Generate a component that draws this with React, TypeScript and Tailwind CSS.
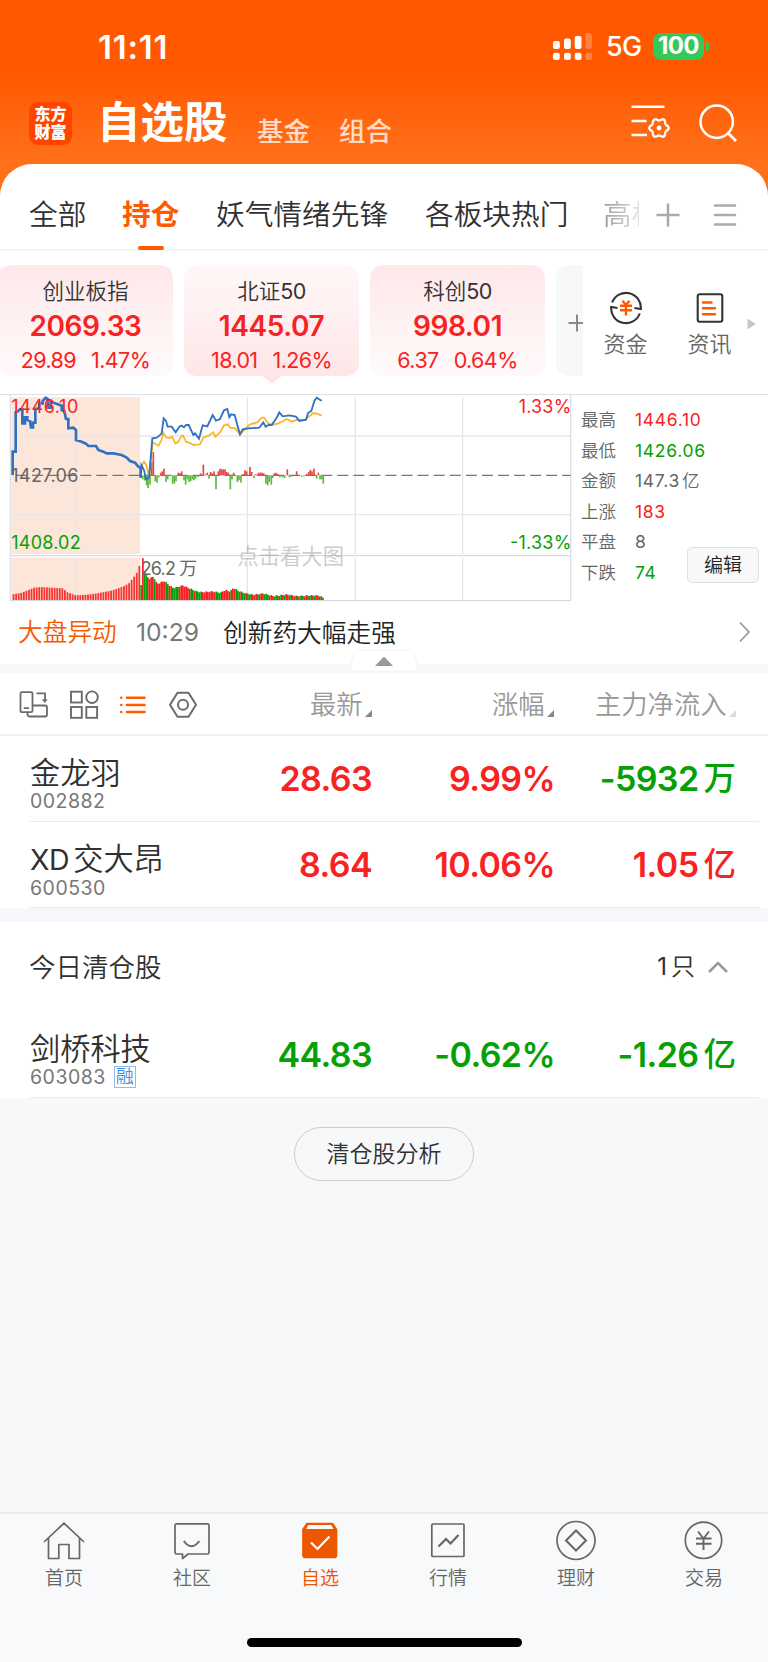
/**
 * Watchlist screen of a stock trading app
 */

import type { ReactNode } from 'react';

type Point = [number, number];

const UP = '#f82222';
const DOWN = '#05a005';

/* ---------- Chart data (chart units, 3 per pixel) ---------- */

const PREV_SESSION: Point[] = [
    [38, 270], [38, 200], [47, 200], [47, 83], [55, 78], [60, 73], [67, 73], [67, 115], [75, 115], [75, 97],
    [82, 97], [82, 105], [90, 108], [93, 127], [99, 127], [99, 113], [106, 113], [106, 72], [118, 70], [118, 55],
    [128, 55], [128, 48], [137, 38], [143, 42], [143, 68], [152, 68], [152, 50], [165, 55], [185, 62], [185, 75],
    [193, 78], [198, 102], [205, 102], [205, 130], [220, 128], [228, 135], [228, 165], [245, 170], [258, 176],
    [265, 183], [288, 183], [295, 195], [310, 200], [320, 205], [340, 205], [365, 210], [380, 218], [390, 228],
    [405, 233], [415, 245], [422, 248], [422, 278],
];

const PRICE: Point[] = [
    [422, 278], [424, 240], [432, 255], [438, 283], [447, 278], [457, 160], [470, 158], [478, 152], [485, 145],
    [491, 100], [498, 108], [503, 125], [515, 125], [527, 142], [538, 125], [545, 122], [552, 127], [558, 120],
    [566, 120], [580, 150], [585, 145], [597, 161], [608, 121], [622, 124], [638, 90], [648, 107], [660, 102],
    [672, 76], [682, 72], [688, 97], [694, 88], [704, 90], [712, 120], [720, 148], [728, 133], [745, 130],
    [778, 128], [790, 112], [797, 125], [806, 120], [815, 120], [830, 98], [838, 82], [848, 94], [868, 91],
    [888, 95], [898, 108], [918, 104], [924, 84], [934, 78], [943, 48], [950, 38], [965, 47],
];

const AVERAGE: Point[] = [
    [422, 278], [426, 240], [432, 230], [438, 238], [445, 265], [448, 275], [458, 172], [475, 182], [485, 165],
    [490, 143], [498, 157], [508, 160], [516, 155], [526, 175], [534, 172], [545, 152], [549, 152], [558, 170],
    [572, 175], [580, 180], [600, 178], [610, 158], [625, 152], [640, 142], [646, 155], [660, 142], [672, 121],
    [684, 118], [690, 128], [706, 130], [720, 148], [735, 132], [750, 118], [772, 112], [785, 98], [792, 98],
    [805, 115], [818, 120], [835, 115], [850, 108], [860, 102], [875, 110], [890, 105], [915, 105], [930, 92],
    [940, 84], [950, 86], [965, 91],
];

// Signed bar heights around the previous close
const MOMENTUM: Point[] = [
    [428, -12], [434, -15], [440, -30], [444, -38], [450, -28], [455, 40], [460, 70], [466, -18], [471, -22],
    [476, -6], [482, 8], [487, 12], [492, 20], [498, -20], [503, -12], [508, -3], [518, -25], [523, -25],
    [528, -18], [535, 8], [540, 6], [545, 12], [552, -15], [557, -28], [562, -12], [567, -20], [572, -17],
    [577, -12], [582, -15], [587, -10], [595, -5], [602, 6], [610, 32], [616, 3], [622, 8], [627, -10],
    [632, 10], [637, 6], [642, 12], [648, -42], [655, 12], [660, 20], [665, 18], [670, 18], [675, 18],
    [680, 10], [685, 8], [691, -42], [696, -12], [701, 8], [712, -20], [717, -15], [723, -22], [730, 4],
    [735, 15], [740, 12], [750, 25], [755, 10], [762, -8], [768, 4], [776, 8], [781, 8], [786, 8], [791, 6],
    [798, -25], [803, -30], [808, -20], [814, -28], [818, -8], [823, 6], [828, 8], [834, 4], [840, -6],
    [848, -6], [854, -8], [862, 18], [868, -6], [875, -4], [890, 12], [905, -4], [912, -3], [920, 4],
    [926, 10], [931, 16], [936, 12], [942, 20], [950, -10], [955, 8], [960, -12], [965, -12], [970, -25],
];

const VOLUME_BASE = 645;

const PREV_VOLUME: Point[] = [
    [36, 628], [60, 624], [75, 618], [100, 608], [120, 606], [150, 608], [185, 610], [200, 622], [225, 631],
    [260, 629], [290, 625], [330, 617], [350, 611], [370, 603], [385, 594], [400, 575], [408, 563], [418, 536],
];

const VOLUME: Point[] = [
    [420, 600], [425, 600], [428, 518], [433, 555], [438, 570], [447, 580], [460, 573], [470, 595], [480, 592],
    [492, 586], [505, 598], [520, 608], [548, 600], [575, 612], [590, 618], [605, 620], [640, 618], [660, 622],
    [675, 614], [690, 618], [700, 607], [712, 615], [730, 622], [760, 628], [790, 624], [820, 632], [860, 627],
    [890, 632], [930, 630], [955, 630], [972, 638],
];

const VOLUME_COLORS =
    'grggrrrrgrrrrrrggrrggggrrrrrrrggrggggrrrrrrrrggggrrrrrgrrgggrggrgggrrrggrrgggrrrggrggrgrrggrrgrrggrrgg' +
    'grgrrggrrgg';

function interpolate(points: Point[], x: number) {
    for (let i = 1; i < points.length; i++) {
        const [x0, y0] = points[i - 1];
        const [x1, y1] = points[i];
        if (x <= x1) return y0 + ((y1 - y0) * (x - x0)) / (x1 - x0);
    }
    return points[points.length - 1][1];
}

const toPolyline = (points: Point[]) => points.map((p) => p.join(',')).join(' ');

const prevBars = Array.from({ length: 50 }, (_, i) => 38 + i * 7.7);
const volumeBars = Array.from({ length: 110 }, (_, i) => 421 + i * 5);

/* ---------- Content ---------- */

const INDICES = [
    { name: '创业板指', price: '2069.33', change: '29.89', percent: '1.47%', active: false },
    { name: '北证', suffix: '50', price: '1445.07', change: '18.01', percent: '1.26%', active: true },
    { name: '科创', suffix: '50', price: '998.01', change: '6.37', percent: '0.64%', active: false },
];

const STATS = [
    { label: '最高', value: '1446.10', color: 'text-[#f82222]' },
    { label: '最低', value: '1426.06', color: 'text-[#05a005]' },
    { label: '金额', value: '147.3', unit: '亿', color: 'text-[#666]' },
    { label: '上涨', value: '183', color: 'text-[#f82222]' },
    { label: '平盘', value: '8', color: 'text-[#666]' },
    { label: '下跌', value: '74', color: 'text-[#05a005]' },
];

interface Stock {
    prefix?: string;
    name: string;
    code: string;
    price: string;
    percent: string;
    flow: string;
    unit: string;
    margin?: boolean;
    color: string;
    flowColor: string;
}

const HOLDINGS: Stock[] = [
    { name: '金龙羽', code: '002882', price: '28.63', percent: '9.99%', flow: '-5932', unit: '万', color: 'text-[#f82222]', flowColor: 'text-[#05a005]' },
    { prefix: 'XD', name: '交大昂', code: '600530', price: '8.64', percent: '10.06%', flow: '1.05', unit: '亿', color: 'text-[#f82222]', flowColor: 'text-[#f82222]' },
];

const CLEARED: Stock = {
    name: '剑桥科技', code: '603083', price: '44.83', percent: '-0.62%', flow: '-1.26', unit: '亿', margin: true, color: 'text-[#05a005]', flowColor: 'text-[#05a005]',
};

/* ---------- Icons ---------- */

const GEAR_POINTS = Array.from({ length: 73 }, (_, i) => {
    const angle = (i * Math.PI) / 36;
    const r = 8.6 + 1.1 * Math.cos(6 * angle);
    return `${(28 + r * Math.cos(angle)).toFixed(2)},${(23 + r * Math.sin(angle)).toFixed(2)}`;
}).join(' ');

function FilterIcon() {
    return (
        <svg className="w-10 h-9" viewBox="0 0 40 36" fill="none" stroke="white" strokeWidth="2.6">
            <path d="M0.5 1.7H33.5M0.5 16H15.5M0.5 30H16" />
            <polygon points={GEAR_POINTS} strokeWidth="2.3" strokeLinejoin="round" />
            <circle cx="28" cy="23" r="2.4" fill="white" stroke="none" />
        </svg>
    );
}

function SearchIcon() {
    return (
        <svg className="w-10 h-10" viewBox="0 0 40 40" fill="none" stroke="white" strokeWidth="2.5">
            <circle cx="18.7" cy="18.7" r="16.2" />
            <path d="M30.2 30.2L38 38" strokeWidth="2.8" />
        </svg>
    );
}

function SignalIcon() {
    const columns = [
        { x: 0, y: 8 },
        { x: 11, y: 5.5 },
        { x: 21.7, y: 3 },
        { x: 32.3, y: 0 },
    ];
    return (
        <svg className="w-10 h-[27px]" viewBox="0 0 40 27" fill="white">
            {columns.map(({ x, y }, i) => (
                <g key={x} opacity={i === 3 ? 0.25 : 1}>
                    <rect x={x} y={y} width="6.8" height={16 - y} rx="2" />
                    <rect x={x} y="19.7" width="6.8" height="7.3" rx="2" />
                </g>
            ))}
        </svg>
    );
}

function FundIcon() {
    return (
        <svg className="w-[34px] h-[34px]" viewBox="0 0 34 34" fill="none" stroke="#333" strokeWidth="2.1">
            <path d="M3.2 11.5A14.8 14.8 0 0 1 31.8 18L25.5 17" />
            <path d="M30.8 22.5A14.8 14.8 0 0 1 2.2 16L8.5 17" />
            <path d="M13.5 9.8L17 14L20.5 9.8M11 14.8H23M11 19.3H23M17 14V24.5" stroke="#ff5a00" strokeWidth="2.4" />
        </svg>
    );
}

function NewsIcon() {
    return (
        <svg className="w-[34px] h-[34px]" viewBox="0 0 34 34" fill="none" stroke="#333" strokeWidth="2.1">
            <rect x="4.7" y="3.2" width="24.6" height="27.6" rx="2" />
            <path d="M10 11.4H18.5M10 17.3H22M10 23.2H22" stroke="#ff5a00" strokeWidth="2.5" strokeLinecap="round" />
        </svg>
    );
}

function RotateIcon() {
    return (
        <svg className="w-[30px] h-[30px]" viewBox="0 0 30 30" fill="none" stroke="#6b6b6b" strokeWidth="1.8">
            <rect x="1.5" y="2.2" width="12" height="20" rx="1.5" />
            <path d="M13.5 15.5H26a2 2 0 0 1 2 2V24.5a2 2 0 0 1-2 2H10.5a2 2 0 0 1-2-2V22M4.8 18.2H10" />
            <path d="M17.5 3.3H26V11" />
            <path d="M22.8 9.3H28.6L25.8 13Z" fill="#6b6b6b" stroke="none" />
        </svg>
    );
}

function GridIcon() {
    return (
        <svg className="w-[30px] h-[30px]" viewBox="0 0 30 30" fill="none" stroke="#6b6b6b" strokeWidth="1.9">
            <rect x="2" y="1.7" width="10.8" height="10.8" />
            <circle cx="23" cy="7.2" r="5.8" />
            <rect x="2" y="17" width="10.8" height="10.8" />
            <rect x="17.3" y="17" width="10.8" height="10.8" />
        </svg>
    );
}

function ListIcon() {
    return (
        <svg className="w-[30px] h-[30px]" viewBox="0 0 30 30" fill="none" stroke="#ff5a00" strokeWidth="2.6" strokeLinecap="round">
            <path d="M9 7.7H26.5M9 15H26.5M9 22H26.5" />
            <path d="M3.3 7.7h0.01M3.3 15h0.01M3.3 22h0.01" />
        </svg>
    );
}

function NutIcon() {
    return (
        <svg className="w-[30px] h-[30px]" viewBox="0 0 30 30" fill="none" stroke="#6b6b6b" strokeWidth="2" strokeLinejoin="round">
            <path d="M9.5 2.8H20.5L28 14.8L20.5 26.8H9.5L2 14.8Z" />
            <circle cx="15" cy="14.8" r="5" />
        </svg>
    );
}

function SortMark({ faded }: { faded?: boolean }) {
    return (
        <svg className="w-[7px] h-[7px] mt-[17px]" viewBox="0 0 7 7">
            <path d="M7 0V7H0Z" fill={faded ? '#dcdcdc' : '#888'} />
        </svg>
    );
}

const NAV_ITEMS: { label: string; icon: ReactNode }[] = [
    {
        label: '首页',
        icon: (
            <path d="M1 21L21 2.2L41 21M5.5 17.5V37.5H15.8V23.5H26V37.5H36.5V17.5" strokeLinejoin="round" />
        ),
    },
    {
        label: '社区',
        icon: (
            <>
                <path d="M5.5 2.8H36.5a1.5 1.5 0 0 1 1.5 1.5V31.5a1.5 1.5 0 0 1-1.5 1.5H17L11.5 37.5V33H5.5a1.5 1.5 0 0 1-1.5-1.5V4.3a1.5 1.5 0 0 1 1.5-1.5Z" strokeLinejoin="round" />
                <path d="M12.8 20Q20.5 30.5 28.3 20" strokeWidth="2" />
            </>
        ),
    },
    {
        label: '自选',
        icon: (
            <>
                <path d="M8 2.5H33.5L37.5 8.5V34a2.5 2.5 0 0 1-2.5 2.5H6.5a2.5 2.5 0 0 1-2.5-2.5V8.5Z" fill="#ed5700" strokeLinejoin="round" />
                <path d="M9.3 4H32.3L34.5 8H7.2Z" fill="#f8f9fb" stroke="none" />
                <path d="M12 21.5L18.5 28L30.5 15.5" stroke="white" strokeWidth="2.2" />
            </>
        ),
    },
    {
        label: '行情',
        icon: (
            <>
                <rect x="4.8" y="3" width="32.2" height="32.5" rx="1" />
                <path d="M11.5 25.5L19 18L23.5 22.5L31.5 14" strokeWidth="2.2" />
            </>
        ),
    },
    {
        label: '理财',
        icon: (
            <>
                <circle cx="21" cy="19.5" r="19" />
                <path d="M21 9.5L31 19.5L21 29.5L11 19.5Z" strokeWidth="2" />
            </>
        ),
    },
    {
        label: '交易',
        icon: (
            <>
                <circle cx="20.5" cy="19.3" r="18.2" />
                <path d="M15 10.5L20.5 17.5L26 10.5M13 17.5H28.5M13 22.7H28.5M20.5 17V29" strokeWidth="1.9" />
            </>
        ),
    },
];

/* ---------- Sections ---------- */

function Header() {
    return (
        <header className="h-[200px] -mb-9 bg-linear-to-b from-[#ff5800] from-35% to-[#ff7018] to-80% text-white">
            <div className="h-[92px] pl-[98px] pr-[58px] pt-[1px] flex items-center">
                <span className="w-[455px] text-[33px] leading-8 tracking-[0.8px] font-semibold">11:11</span>
                <SignalIcon />
                <span className="ml-[13px] w-[47px] text-[27px] leading-8 font-medium tracking-tight">5G</span>
                <span className="w-[51px] h-[27px] rounded-lg bg-[#34c759] text-[24px] leading-[26px] font-bold text-center tracking-tight">
                    100
                </span>
                <span className="ml-[2px] w-[3px] h-[9px] rounded-r-full bg-[#34c759]" />
            </div>
            <div className="h-[62px] pl-[29px] pr-[30px] flex items-center">
                <div className="w-[43px] h-[43px] rounded-[9px] bg-[#ff4400] pt-[3px] text-center text-[16px] leading-[18px] font-black">
                    <div>东方</div>
                    <div>财富</div>
                </div>
                <h1 className="ml-[25px] -mt-[2px] w-[160px] text-[43.5px] leading-[44px] font-bold">自选股</h1>
                <span className="w-[82px] mt-[15px] text-[26.5px] leading-7 font-medium text-[#ffdcc8]">基金</span>
                <span className="mt-[15px] text-[26.5px] leading-7 font-medium text-[#ffdcc8]">组合</span>
                <span className="ml-auto mr-[27px]"><FilterIcon /></span>
                <span className="-mt-[1px]"><SearchIcon /></span>
            </div>
        </header>
    );
}

function GroupTabs() {
    return (
        <nav className="h-[87px] pl-[29px] flex border-b-2 border-[#f3f4f6] text-[28.7px] leading-9 text-[#303030]">
            <span className="w-[93px] mt-[33px]">全部</span>
            <span className="w-[94px] flex flex-col font-bold text-[#ff5a00]">
                <span className="mt-[33px]">持仓</span>
                <span className="mt-auto -mb-[1px] ml-4 w-[26px] h-1 rounded-full bg-[#ff5a00]" />
            </span>
            <span className="w-[209px] mt-[33px]">妖气情绪先锋</span>
            <span className="w-[178px] mt-[33px]">各板块热门</span>
            <span className="w-[36px] h-9 mt-[33px] overflow-hidden whitespace-nowrap bg-linear-to-r from-[#999] to-[#e4e4e4] bg-clip-text text-transparent">
                高标
            </span>
            <svg className="ml-[17px] mt-[39px] w-6 h-6" viewBox="0 0 24 24" stroke="#aaa" strokeWidth="2.5" strokeLinecap="round">
                <path d="M12 1.5V22.5M1.5 12H22.5" />
            </svg>
            <svg className="ml-[33px] mt-[39px] w-6 h-6" viewBox="0 0 24 24" stroke="#aaa" strokeWidth="2.4" strokeLinecap="round">
                <path d="M2 2.5H22M2 12H22M2 21.5H22" />
            </svg>
        </nav>
    );
}

function IndexCard({ name, suffix, price, change, percent, active }: (typeof INDICES)[number]) {
    return (
        <div
            className={`relative shrink-0 w-[175px] h-[111px] rounded-[13px] pt-[13px] text-center ${
                active ? 'bg-linear-to-b from-[#fff8f8] to-[#fee6e8]' : 'bg-linear-to-b from-[#fee8ea] to-[#fffafa]'
            }`}
        >
            <div className="text-[21.5px] leading-[26px] text-[#333]">
                {name}
                {suffix && <span className="font-normal tracking-[-0.6px]">{suffix}</span>}
            </div>
            <div className="mt-[8px] text-[28px] leading-[28px] tracking-[-0.4px] font-semibold text-[#f82222]">{price}</div>
            <div className="mt-[7px] flex justify-center gap-[15px] text-[21.5px] leading-[26px] tracking-[-0.6px] font-normal text-[#f82222]">
                <span>{change}</span>
                <span>{percent}</span>
            </div>
            {active && (
                <svg className="absolute left-[78px] top-[110.5px] w-5 h-[7px]" viewBox="0 0 20 7">
                    <path d="M0 0H20L11.5 6.5Q10 7.5 8.5 6.5Z" fill="#fee6e8" />
                </svg>
            )}
        </div>
    );
}

function IndexStrip() {
    return (
        <section className="h-[143px] pt-[14px] flex">
            <div className="w-[585px] flex gap-[11px] -ml-[2px]">
                {INDICES.map((item) => (
                    <IndexCard key={item.name} {...item} />
                ))}
                <div className="flex-1 h-[111px] rounded-l-[13px] bg-[#f7f8fa] flex items-center justify-end">
                    <svg className="mt-1 w-[15px] h-[18px]" viewBox="0 0 15 18" stroke="#888" strokeWidth="2">
                        <path d="M9 0.5V17.5M0.5 9H15" />
                    </svg>
                </div>
            </div>
            <div className="w-[85px] pt-[26px] flex flex-col items-center text-[22px] leading-[26px] text-[#666]">
                <FundIcon />
                <span className="mt-[6px]">资金</span>
            </div>
            <div className="w-[83px] pt-[26px] flex flex-col items-center text-[22px] leading-[26px] text-[#666]">
                <NewsIcon />
                <span className="mt-[6px]">资讯</span>
            </div>
            <svg className="mt-[53px] ml-[-4px] w-[9px] h-[12px]" viewBox="0 0 9 12">
                <path d="M0.5 0.5L9 6L0.5 11.5Z" fill="#c8c8c8" />
            </svg>
        </section>
    );
}

function IntradayChart() {
    return (
        <svg className="shrink-0 w-[574px] h-[208px] font-normal" viewBox="0 30 1722 624" fontSize="54">
            <rect x="34" y="37" width="386" height="470" fill="#fce5d9" />
            <rect x="34" y="518" width="386" height="128" fill="#fce5d9" />
            <g stroke="#e4e7ee" strokeWidth="4">
                <path d="M32 153H1712M32 389H1712" />
                <path d="M226 37V507M742 37V507M1066 37V507M1388 37V507" />
                <path d="M226 518V646M742 518V646M1066 518V646M1388 518V646" />
            </g>
            <path d="M31 28V648M1712 28V648M31 512H1712M31 647H1712" stroke="#d8dbe3" strokeWidth="3.5" />
            <path d="M48 271H1712" stroke="#777" strokeWidth="4" strokeDasharray="33 15.2" />

            {MOMENTUM.map(([x, h]) => (
                <rect
                    key={x}
                    x={x - 2.5}
                    y={h > 0 ? 271 - h : 271}
                    width="5"
                    height={Math.abs(h)}
                    fill={h > 0 ? '#e64545' : '#5cb83f'}
                />
            ))}

            {prevBars.map((x) => {
                const top = interpolate(PREV_VOLUME, x);
                return <rect key={x} x={x} y={top} width="5.4" height={VOLUME_BASE - top} fill="#f8342e" />;
            })}
            {volumeBars.map((x, i) => {
                const top = interpolate(VOLUME, x + 2) + (i % 3) * 1.5;
                return (
                    <rect
                        key={x}
                        x={x}
                        y={top}
                        width="5.2"
                        height={VOLUME_BASE - top}
                        fill={VOLUME_COLORS[i] === 'r' ? UP : DOWN}
                    />
                );
            })}

            <polyline points={toPolyline(AVERAGE)} fill="none" stroke="#fbb72f" strokeWidth="5.5" />
            <polyline points={toPolyline(PREV_SESSION)} fill="none" stroke="#2f72c4" strokeWidth="8" />
            <polyline points={toPolyline(PRICE)} fill="none" stroke="#2f72c4" strokeWidth="5.5" />

            <text x="34" y="85" fill={UP} textLength="201">1446.10</text>
            <text x="34" y="290" fill="#666" textLength="201">1427.06</text>
            <text x="34" y="493" fill={DOWN} textLength="208">1408.02</text>
            <text x="1556" y="85" fill={UP} textLength="158">1.33%</text>
            <text x="1530" y="493" fill={DOWN} textLength="184">-1.33%</text>
            <text x="422" y="570" fill="#666" textLength="170">26.2 万</text>
            <text x="712" y="536" fill="#999" fillOpacity="0.5" fontSize="64" textLength="320">点击看大图</text>
        </svg>
    );
}

function MarketPanel() {
    return (
        <section className="relative h-[208px] box-content border-t border-[#dcdfe6] flex">
            <IntradayChart />
            <div className="pl-[7px] pt-[10px]">
                {STATS.map(({ label, value, unit, color }) => (
                    <div key={label} className="h-[30.5px] flex items-center text-[17.5px] leading-5">
                        <span className="w-[54px] text-[#666]">{label}</span>
                        <span className={`font-normal tracking-[0.7px] ${color}`}>{value}</span>
                        {unit && <span className={`ml-[2px] ${color}`}>{unit}</span>}
                    </div>
                ))}
            </div>
            <button className="absolute left-[687px] top-[152px] w-[72px] h-9 rounded-[5px] border border-[#dcdfe6] bg-[#f7f8fa] text-[19px] leading-none text-[#222]">
                编辑
            </button>
        </section>
    );
}

function NewsTicker() {
    return (
        <section className="relative h-[70px] border-b-[9px] border-[#f5f7fa] flex items-start pl-[18px] text-[24.7px] leading-[30px]">
            <span className="w-[118px] mt-[14px] text-[#f55a00]">大盘异动</span>
            <span className="w-[87px] mt-[14px] font-normal text-[#777]">10:29</span>
            <span className="mt-[15px] text-[#222]">创新药大幅走强</span>
            <svg className="ml-auto mr-[18px] mt-[18px] w-[11px] h-[22px]" viewBox="0 0 11 22" fill="none" stroke="#999" strokeWidth="1.8">
                <path d="M1 1.5L10 11L1 20.5" />
            </svg>
            <svg className="absolute left-[349px] top-[46px] w-[70px] h-[23px]" viewBox="0 0 70 23">
                <path d="M1 22C3 8 5 1 14 1H56C65 1 67 8 69 22Z" fill="white" stroke="#f3f4f6" strokeWidth="1" />
                <path d="M26 17L34 8.5Q35 7.5 36 8.5L44 17Z" fill="#999" />
            </svg>
        </section>
    );
}

function TableHead() {
    return (
        <div className="h-[63px] pl-[19px] pt-[2px] flex items-center border-b-2 border-[#f1f2f4] text-[26.3px] leading-8 text-[#999]">
            <div className="w-[291px] flex gap-[19.5px]">
                <RotateIcon />
                <GridIcon />
                <ListIcon />
                <NutIcon />
            </div>
            <div className="w-[182px] flex gap-[2px] items-center">最新<SortMark /></div>
            <div className="w-[103px] flex gap-[2px] items-center">涨幅<SortMark /></div>
            <div className="flex gap-[3px] items-center">主力净流入<SortMark faded /></div>
        </div>
    );
}

function StockRow({ stock }: { stock: Stock }) {
    return (
        <div className="h-[86px] ml-[30px] mr-[9px] pr-[23px] flex border-b border-[#e9eaec] text-[34px]">
            <div className="w-[190px] pt-[19px]">
                <div className="text-[30.2px] leading-9 text-[#303030]">
                    {stock.prefix && <span className="mr-[4px] text-[28.5px] font-normal tracking-[-0.4px]">{stock.prefix}</span>}
                    {stock.name}
                </div>
                <div className="flex items-center text-[19.5px] leading-5 tracking-[0.5px] font-normal text-[#777]">
                    {stock.code}
                    {stock.margin && (
                        <span className="ml-[8px] w-[22px] h-[22px] -my-px border border-[#8fbcf0] text-[18px] leading-5 text-center tracking-normal font-[350] text-[#3f8ce0]">
                            融
                        </span>
                    )}
                </div>
            </div>
            <div className={`w-[152px] pt-[22px] text-right leading-[42px] tracking-[-0.6px] font-semibold ${stock.color}`}>{stock.price}</div>
            <div className={`w-[183px] pt-[22px] text-right leading-[42px] tracking-[-0.6px] font-semibold ${stock.color}`}>{stock.percent}</div>
            <div className={`flex-1 pt-[22px] flex justify-end gap-[5px] leading-[42px] font-semibold ${stock.flowColor}`}>
                <span className="tracking-[-0.6px]">{stock.flow}</span>
                <span className="text-[32.5px] font-medium">{stock.unit}</span>
            </div>
        </div>
    );
}

function BottomNav() {
    return (
        <footer className="h-[150px] border-t-2 border-[#ececee] bg-[#f8f9fb]">
            <div className="grid grid-cols-6 pt-[7px]">
                {NAV_ITEMS.map(({ label, icon }) => {
                    const active = label === '自选';
                    return (
                        <div
                            key={label}
                            className={`flex flex-col items-center text-[19px] leading-6 ${active ? 'text-[#ed5700]' : 'text-[#666]'}`}
                        >
                            <svg className="w-[42px] h-10 overflow-visible" viewBox="0 0 42 40" fill="none" stroke="currentColor" strokeWidth="1.7">
                                {icon}
                            </svg>
                            <span className="mt-[6px]">{label}</span>
                        </div>
                    );
                })}
            </div>
            <div className="mx-auto mt-[47px] w-[275px] h-[9px] rounded-full bg-black" />
        </footer>
    );
}

export default function App() {
    return (
        <div
            lang="zh-CN"
            className="w-[768px] h-[1662px] overflow-hidden flex flex-col bg-[#f7f8fa] font-['Inter','Noto_Sans_CJK_SC',sans-serif] font-[350]"
        >
            <Header />
            <main className="bg-white rounded-t-[32px]">
                <GroupTabs />
                <IndexStrip />
                <MarketPanel />
                <NewsTicker />
                <TableHead />
                {HOLDINGS.map((stock) => (
                    <StockRow key={stock.code} stock={stock} />
                ))}
                <div className="h-[14px] bg-[#f5f7fa]" />
                <div className="h-[90px] pl-[29px] pr-[40px] flex items-center text-[26.5px] leading-8 text-[#303030]">
                    <span>今日清仓股</span>
                    <span className="ml-auto mr-[13px] text-[24px] flex gap-1">
                        <span className="font-normal">1</span>
                        <span>只</span>
                    </span>
                    <svg className="w-5 h-3" viewBox="0 0 20 12" fill="none" stroke="#999" strokeWidth="2.5">
                        <path d="M1 11L10 2L19 11" />
                    </svg>
                </div>
                <StockRow stock={CLEARED} />
            </main>
            <div className="flex-1 pt-[29px] flex justify-center items-start">
                <button className="w-[180px] h-[54px] rounded-full border border-[#ccc] text-[23px] leading-none text-[#303030]">
                    清仓股分析
                </button>
            </div>
            <BottomNav />
        </div>
    );
}
